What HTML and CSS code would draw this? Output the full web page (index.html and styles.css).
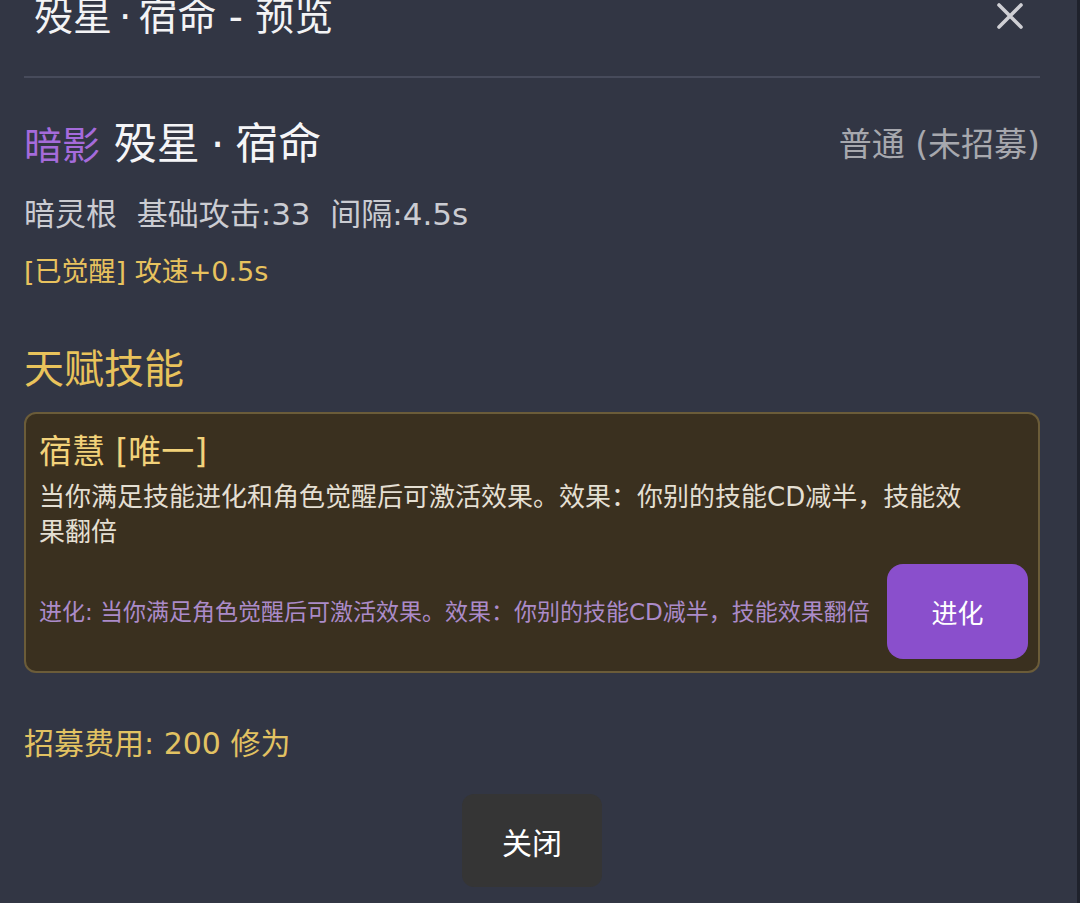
FILE: index.html
```html
<!DOCTYPE html>
<html lang="zh-CN">
<head>
<meta charset="utf-8">
<title>殁星·宿命 - 预览</title>
<link rel="stylesheet" href="styles.css">
</head>
<body>
<div class="screen">
  <div class="dialog">
    <div class="header">
      <div class="title">殁星<span class="dot">·</span>宿命 - 预览</div>
      <svg class="close-x" width="28" height="28" viewBox="0 0 28 28">
        <path d="M3 3 L25 25 M25 3 L3 25" stroke="#cfcfd4" stroke-width="3.6" stroke-linecap="round" fill="none"/>
      </svg>
    </div>
    <div class="divider"></div>

    <div class="name-row">
      <div class="name"><span class="faction">暗影</span> 殁星<span class="dot dot-name">·</span>宿命</div>
      <div class="rarity">普通 (未招募)</div>
    </div>
    <div class="stats">暗灵根&nbsp;&nbsp;基础攻击:33&nbsp;&nbsp;间隔:4.5s</div>
    <div class="awake">[已觉醒] 攻速+0.5s</div>

    <div class="section-title">天赋技能</div>
    <div class="card">
      <div class="skill-name">宿慧 [唯一]</div>
      <div class="skill-desc">当你满足技能进化和角色觉醒后可激活效果。效果：你别的技能CD减半，技能效果翻倍</div>
      <div class="evolve-row">
        <div class="evolve-text">进化: 当你满足角色觉醒后可激活效果。效果：你别的技能CD减半，技能效果翻倍</div>
        <div class="evolve-btn">进化</div>
      </div>
    </div>

    <div class="cost">招募费用: 200 修为</div>
    <div class="footer">
      <div class="close-btn">关闭</div>
    </div>
  </div>
  <div class="edge"></div>
</div>
</body>
</html>
```

FILE: styles.css
```css
html, body {
  margin: 0;
  padding: 0;
  background: #323644;
  overflow: hidden;
}
body {
  width: 1080px;
  height: 903px;
  font-family: "DejaVu Sans", "Noto Sans CJK SC", sans-serif;
}
.screen {
  display: flex;
  width: 1080px;
  height: 903px;
}
.dialog {
  flex: 1;
  padding: 0 37px 0 24px;
  display: flex;
  flex-direction: column;
}
.edge {
  width: 3px;
  background: #1f222c;
}
.header {
  margin-top: -8px;
  height: 50px;
  display: flex;
  align-items: center;
  justify-content: space-between;
  padding: 0 16px 0 10px;
  margin-bottom: 34px;
}
.title {
  font-size: 39px;
  line-height: 50px;
  color: #f3f3f5;
}
.dot {
  margin: 0 7px;
}
.dot-name {
  margin: 0 11px;
}
.close-x {
  margin-top: -2px;
}
.divider {
  height: 2px;
  background: #474b5b;
}
.name-row {
  margin-top: 42px;
  display: flex;
  justify-content: space-between;
  align-items: center;
  height: 50px;
}
.name {
  font-size: 43px;
  line-height: 50px;
  color: #f5f5f7;
}
.faction {
  font-size: 38px;
  color: #a56bdb;
}
.rarity {
  font-size: 33px;
  color: #a7a8ae;
  line-height: 50px;
}
.stats {
  margin-top: 24px;
  font-size: 31px;
  line-height: 40px;
  color: #cbccd2;
}
.awake {
  margin-top: 21px;
  font-size: 27px;
  line-height: 34px;
  color: #e8c25e;
}
.section-title {
  margin-top: 55px;
  font-size: 40px;
  line-height: 50px;
  color: #e9c35b;
}
.card {
  margin-top: 18px;
  background: #3a301f;
  border: 2px solid #6b5c39;
  border-radius: 12px;
  padding: 18px 10px 12px 13px;
}
.skill-name {
  font-size: 33px;
  line-height: 40px;
  color: #f2d27a;
}
.skill-desc {
  margin-top: 8px;
  font-size: 26px;
  line-height: 35px;
  color: #e4dfd2;
  max-width: 935px;
}
.evolve-row {
  margin-top: 14px;
  display: flex;
  align-items: center;
  gap: 9px;
}
.evolve-text {
  flex: 1;
  font-size: 23px;
  line-height: 32px;
  color: #ab8bc9;
  white-space: nowrap;
}
.evolve-btn {
  width: 141px;
  height: 95px;
  border-radius: 16px;
  background: #8a4fcc;
  color: #ffffff;
  font-size: 26px;
  display: flex;
  align-items: center;
  justify-content: center;
}
.cost {
  margin-top: 51px;
  font-size: 30px;
  line-height: 40px;
  color: #e2c262;
}
.footer {
  margin-top: 30px;
  display: flex;
  justify-content: center;
}
.close-btn {
  width: 140px;
  height: 93px;
  border-radius: 12px;
  background: #353535;
  color: #ffffff;
  font-size: 30px;
  display: flex;
  align-items: center;
  justify-content: center;
}
```
